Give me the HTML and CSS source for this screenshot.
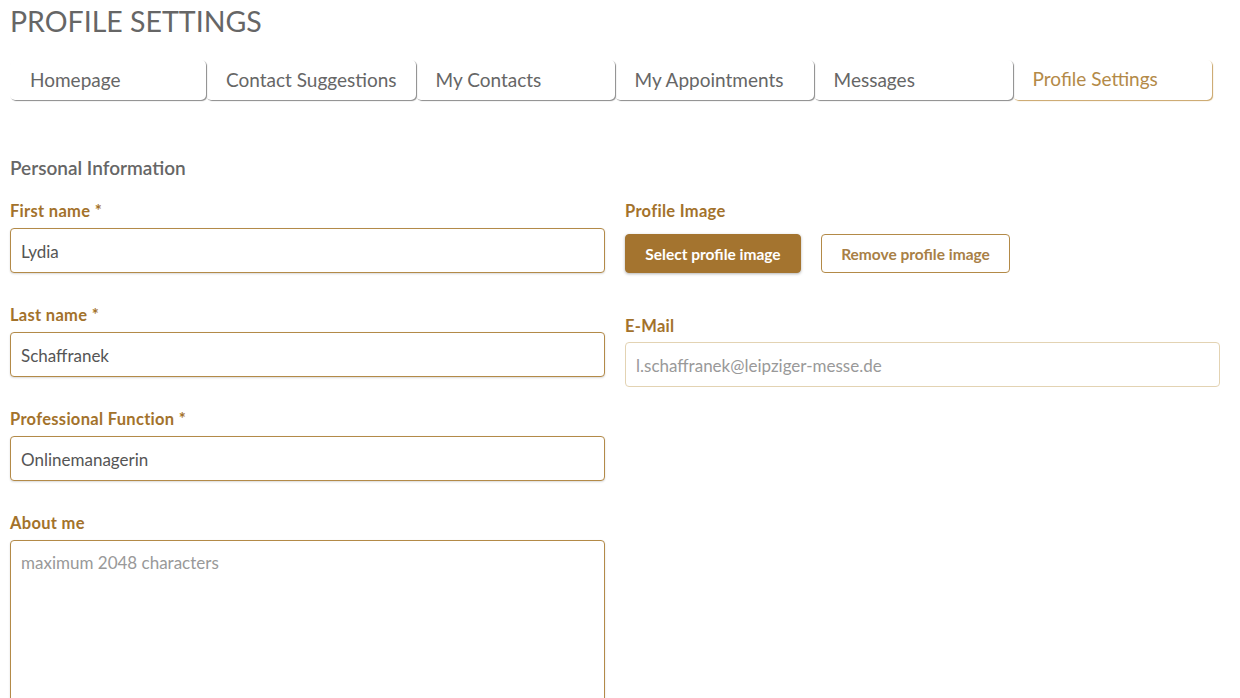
FILE: index.html
```html
<!DOCTYPE html>
<html lang="en">
<head>
    <meta charset="UTF-8">
    <meta name="viewport" content="width=device-width, initial-scale=1.0">
    <title>Profile Settings</title>
    <link rel="stylesheet" href="styles.css">
</head>
<body>
    <div class="page">
        <h1 class="page-title">PROFILE SETTINGS</h1>

        <nav class="tabs">
            <a class="tab" href="#">Homepage</a>
            <a class="tab" href="#">Contact Suggestions</a>
            <a class="tab" href="#">My Contacts</a>
            <a class="tab" href="#">My Appointments</a>
            <a class="tab" href="#">Messages</a>
            <a class="tab active" href="#">Profile Settings</a>
        </nav>

        <h2 class="section-title">Personal Information</h2>

        <div class="form-grid">
            <div class="col">
                <div class="field">
                    <label for="firstName">First name *</label>
                    <input type="text" id="firstName" value="Lydia">
                </div>
                <div class="field">
                    <label for="lastName">Last name *</label>
                    <input type="text" id="lastName" value="Schaffranek">
                </div>
                <div class="field">
                    <label for="func">Professional Function *</label>
                    <input type="text" id="func" value="Onlinemanagerin">
                </div>
                <div class="field">
                    <label for="about">About me</label>
                    <textarea id="about" placeholder="maximum 2048 characters"></textarea>
                </div>
            </div>

            <div class="col">
                <div class="field">
                    <label>Profile Image</label>
                    <div class="image-buttons">
                        <button class="btn btn-primary">Select profile image</button>
                        <button class="btn btn-outline">Remove profile image</button>
                    </div>
                </div>
                <div class="field email-field">
                    <label for="email">E-Mail</label>
                    <input type="text" id="email" placeholder="l.schaffranek@leipziger-messe.de" disabled>
                </div>
            </div>
        </div>
    </div>
</body>
</html>
```

FILE: styles.css
```css
body {
    margin: 0;
    font-family: "Source Sans Pro", Lato, "Liberation Sans", sans-serif;
    color: #666;
    background: #fff;
}
.page {
    width: 1210px;
    padding: 0 10px;
}
.page-title {
    margin: 0;
    padding-top: 4px;
    font-size: 28.5px;
    font-weight: 400;
    line-height: 35px;
    color: #666;
}
.tabs {
    display: flex;
    margin-top: 21px;
    height: 40px;
}
.tab {
    min-width: 199px;
    box-sizing: border-box;
    padding: 0 19px 0 20px;
    line-height: 40px;
    font-size: 19px;
    color: #666;
    text-decoration: none;
    border-radius: 5px;
    box-shadow: 1px 1px 1px #8a8a8a;
}
.tab:first-child {
    min-width: 196px;
}
.tab.active {
    color: #b38a48;
    box-shadow: 1px 1px 1px #c9a466;
    line-height: 38px;
}
.section-title {
    margin: 57px 0 0;
    font-size: 19px;
    font-weight: 600;
    line-height: 22px;
    color: #666;
}
.form-grid {
    display: grid;
    grid-template-columns: 595px 595px;
    column-gap: 20px;
    margin-top: 22px;
}
.field {
    margin-bottom: 32px;
}
label {
    display: block;
    font-size: 16.5px;
    font-weight: 700;
    letter-spacing: 0.3px;
    line-height: 20px;
    color: #a3722b;
    margin-bottom: 7px;
}
input, textarea {
    display: block;
    box-sizing: border-box;
    width: 100%;
    height: 45px;
    padding: 1px 10px 0;
    font-family: inherit;
    font-size: 17px;
    color: #555;
    border: 1px solid #b38a48;
    border-radius: 4px;
    box-shadow: 0 1px 2px rgba(0, 0, 0, 0.15);
    background: #fff;
    outline: none;
}
textarea {
    height: 200px;
    padding: 11px 10px;
    resize: none;
}
::placeholder {
    color: #999;
}
input:disabled {
    border-color: #e3d3b3;
    box-shadow: none;
    background: #fff;
}
.image-buttons {
    display: flex;
    gap: 20px;
    margin-top: 13px;
}
.btn {
    height: 39px;
    padding: 0 10px;
    font-family: inherit;
    font-size: 15.5px;
    font-weight: 700;
    border-radius: 4px;
    cursor: pointer;
}
.btn-primary {
    width: 176px;
    color: #fff;
    background: #a4742f;
    border: 1px solid #a4742f;
    box-shadow: 0 1px 3px rgba(0, 0, 0, 0.3);
}
.btn-outline {
    width: 189px;
    color: #a88046;
    background: #fff;
    border: 1px solid #b38a48;
}
.email-field {
    margin-top: 43px;
}
.email-field label {
    margin-bottom: 6px;
}
```
